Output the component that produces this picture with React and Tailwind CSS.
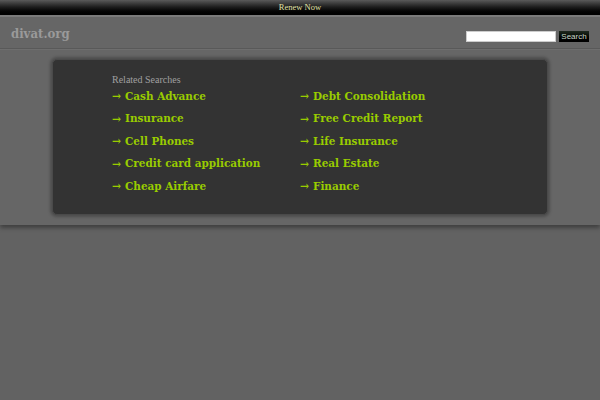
import React from "react";

const left = ["Cash Advance", "Insurance", "Cell Phones", "Credit card application", "Cheap Airfare"];
const right = ["Debt Consolidation", "Free Credit Report", "Life Insurance", "Real Estate", "Finance"];

function Link({ text }) {
  return (
    <div className="h-[22.5px] flex items-center whitespace-nowrap text-[11.6px] font-bold text-[#99cc00] [font-family:'DejaVu_Serif_Condensed','DejaVu_Serif',serif] [font-stretch:condensed]">
      <span className="w-[13px] text-[12px]">→</span>
      <span>{text}</span>
    </div>
  );
}

export default function App() {
  return (
    <div className="w-full min-h-[400px] bg-[#626262] [font-family:'Liberation_Serif',serif]">
      <div className="h-[15px] bg-gradient-to-b from-[#5a5a5a] via-[#1a1a1a] to-black flex items-center justify-center text-[8.5px] text-[#e0e0a8]">
        Renew Now
      </div>
      <div className="h-[2px] bg-[#7a7a7a]" />
      <div className="h-[32px] bg-[#666] flex items-start justify-between px-[11px] border-b border-[#5a5a5a]">
        <div className="pt-[7px] text-[13px] font-bold text-[#9a9a9a] [font-family:'DejaVu_Serif_Condensed','DejaVu_Serif',serif] [font-stretch:condensed]">divat.org</div>
        <div className="flex items-center gap-[3px] pt-[14px]">
          <div className="w-[90px] h-[11px] bg-white border border-[#ccc]" />
          <div className="w-[30px] h-[11px] bg-gradient-to-b from-[#1f2a1f] to-black text-[8px] leading-[11px] text-center text-[#c8d8c8] [font-family:'Liberation_Sans',sans-serif]">Search</div>
        </div>
      </div>
      <div className="h-[1px] bg-[#707070]" />
      <div className="bg-[#666] pt-[9px] pb-[10px] shadow-[0_3px_4px_rgba(0,0,0,0.35)]">
        <div className="mx-auto w-[496px] h-[156px] rounded-[5px] bg-[#333] border border-[#4a4a4a] shadow-[0_0_3px_2px_rgba(0,0,0,0.25)] pl-[59px] pt-[14px]">
          <div className="text-[10px] text-[#a0a0a0] leading-[12px]">Related Searches</div>
          <div className="flex -mt-[1px]">
            <div className="w-[188px]">
              {left.map((t) => <Link key={t} text={t} />)}
            </div>
            <div>
              {right.map((t) => <Link key={t} text={t} />)}
            </div>
          </div>
        </div>
      </div>
    </div>
  );
}
